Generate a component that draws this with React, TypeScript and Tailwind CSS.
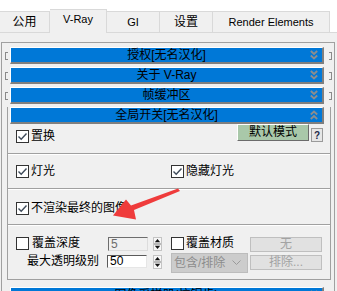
import React from "react";

const Check = ({ checked }: { checked?: boolean }) => (
  <span className="flex h-[13px] w-[13px] shrink-0 items-center justify-center border border-[#333] bg-white">
    {checked && (
      <svg width="11" height="11" viewBox="0 0 11 11">
        <polyline points="1.5,5.5 4.2,8.2 9.5,2.5" fill="none" stroke="#3f4b5a" strokeWidth="1.4" />
      </svg>
    )}
  </span>
);

const Chevrons = ({ up }: { up?: boolean }) => (
  <svg width="8" height="10" viewBox="0 0 8 10" className="shrink-0">
    {up ? (
      <>
        <polyline points="0.8,4.5 4,1.5 7.2,4.5" fill="none" stroke="#8d8d8d" strokeWidth="1.8" />
        <polyline points="0.8,9 4,6 7.2,9" fill="none" stroke="#8d8d8d" strokeWidth="1.8" />
      </>
    ) : (
      <>
        <polyline points="0.8,1 4,4 7.2,1" fill="none" stroke="#8d8d8d" strokeWidth="1.8" />
        <polyline points="0.8,5.5 4,8.5 7.2,5.5" fill="none" stroke="#8d8d8d" strokeWidth="1.8" />
      </>
    )}
  </svg>
);

const Bar = ({ title, up }: { title: string; up?: boolean }) => (
  <div className="flex h-[17px] w-[314px] items-center border-t border-l border-r-2 border-b-2 border-t-white border-l-white border-r-[#7f7f7f] border-b-[#7f7f7f] bg-[#0078d7]">
    <span className="w-[12px] shrink-0" />
    <span className="flex-1 text-center text-[12px] leading-[14px] text-black">{title}</span>
    <span className="mr-[4px] flex">
      <Chevrons up={up} />
    </span>
  </div>
);

const Rollout = ({ title }: { title: string }) => (
  <div className="mb-[3px] flex items-center">
    <span className="ml-[3px] h-[8px] w-[3px] border-y border-l border-[#8a8a8a]" />
    <span className="ml-[2px] flex">
      <Bar title={title} />
    </span>
    <span className="ml-[5px] h-[8px] w-[3px] border-y border-r border-[#8a8a8a]" />
  </div>
);

const Spinner = () => (
  <svg width="9" height="14" viewBox="0 0 9 14" className="shrink-0">
    <rect x="0.5" y="0.5" width="8" height="13" fill="#f7f7f7" stroke="#c4c4c4" />
    <line x1="1" y1="7" x2="8" y2="7" stroke="#7a7a7a" />
    <polygon points="4.5,2 7.2,5.2 1.8,5.2" fill="#111" />
    <polygon points="1.8,8.8 7.2,8.8 4.5,12" fill="#111" />
  </svg>
);

const Separator = () => <div className="h-[2px] border-t border-b border-t-[#a0a0a0] border-b-white" />;

const tabs = [
  { label: "公用", w: "w-[50px]" },
  { label: "V-Ray", w: "w-[57px]", active: true },
  { label: "GI", w: "w-[53px]" },
  { label: "设置", w: "w-[53px]" },
  { label: "Render Elements", w: "w-[117px]" },
];

export default function App() {
  return (
    <div className="relative h-[291px] w-[337px] overflow-hidden bg-white font-['Liberation_Sans','Noto_Sans_CJK_SC',sans-serif] text-[12px] leading-[13px] text-black">
      {/* tab strip */}
      <div className="flex h-[33px] items-end border-b border-[#d9d9d9]">
        {tabs.map((t) =>
          t.active ? (
            <div
              key={t.label}
              className={`${t.w} relative z-10 -mb-px flex h-[24px] items-center justify-center border-t border-r border-[#d9d9d9] bg-[#f0f0f0] pb-[4px] text-[11px]`}
            >
              {t.label}
            </div>
          ) : (
            <div
              key={t.label}
              className={`${t.w} flex h-[21px] items-center justify-center border-t border-r border-[#d9d9d9] bg-[#f0f0f0] text-[11px]`}
            >
              <span className={t.label.length <= 2 && /[^\x00-\x7f]/.test(t.label) ? "text-[12px]" : ""}>{t.label}</span>
            </div>
          )
        )}
      </div>

      {/* panel */}
      <div className="h-[258px] bg-[#f0f0f0] pt-[9px]">
        <div className="ml-[1px] h-[260px] w-[334px] border-t border-x border-[#a0a0a0] pt-[4px]">
          <Rollout title="授权[无名汉化]" />
          <Rollout title="关于 V-Ray" />
          <Rollout title="帧缓冲区" />

          {/* expanded rollout */}
          <div className="ml-[5px] w-[324px] border-x border-b border-[#a0a0a0]">
            <div className="ml-[2px] flex">
              <Bar title="全局开关[无名汉化]" up />
            </div>

            <div className="flex h-[29px] items-start pl-[8px]">
              <label className="mt-[6px] flex items-center gap-[2px]">
                <Check checked />
                <span>置换</span>
              </label>
              <button className="ml-auto h-[17px] w-[72px] border border-t-white border-l-white border-r-[#6b6b6b] border-b-[#6b6b6b] bg-[#a9c8a9] text-[12px] leading-[13px]">
                默认模式
              </button>
              <span className="mt-[4px] mr-[7px] ml-[2px] flex h-[14px] w-[12px] items-center justify-center border border-[#9a9a9a] bg-[#e6e6e6] text-[10px] font-bold text-[#1d2a4a]">
                ?
              </span>
            </div>
            <Separator />

            <div className="flex h-[33px] items-start pt-[10px] pl-[8px]">
              <label className="flex w-[155px] items-center gap-[2px]">
                <Check checked />
                <span>灯光</span>
              </label>
              <label className="flex items-center gap-[2px]">
                <Check checked />
                <span>隐藏灯光</span>
              </label>
            </div>
            <Separator />

            <div className="flex h-[34px] items-start pt-[12px] pl-[8px]">
              <label className="flex items-center gap-[2px]">
                <Check checked />
                <span>不渲染最终的图像</span>
              </label>
            </div>
            <Separator />

            <div className="h-[53px] pt-[11px] pl-[8px]">
              <div className="flex h-[15px] items-start">
                <div className="flex w-[155px] items-start">
                  <label className="flex w-[92px] items-center gap-[3px]">
                    <Check />
                    <span>覆盖深度</span>
                  </label>
                  <div className="h-[14px] w-[40px] border border-t-[#6d6d6d] border-l-[#6d6d6d] border-r-[#dcdcdc] border-b-[#dcdcdc] bg-[#f0f0f0] pl-[2px] text-[12px] leading-[12px] text-[#6d6d6d]">
                    5
                  </div>
                  <span className="ml-[5px] flex">
                    <Spinner />
                  </span>
                </div>
                <label className="flex w-[79px] items-center gap-[2px]">
                  <Check />
                  <span>覆盖材质</span>
                </label>
                <div className="flex h-[15px] w-[72px] items-center justify-center border border-[#bfbfbf] bg-[#e1e1e1] text-[#a3a3a3]">
                  无
                </div>
              </div>

              <div className="mt-[1px] flex h-[20px] items-start">
                <div className="flex w-[155px] items-start pt-[2px]">
                  <span className="ml-[11px] w-[80px]">最大透明级别</span>
                  <div className="h-[13px] w-[40px] border border-t-[#5a5a5a] border-l-[#5a5a5a] border-r-[#e6e6e6] border-b-[#e6e6e6] bg-white pl-[2px] text-[12px] leading-[11px]">
                    50
                  </div>
                  <span className="ml-[6px] flex">
                    <Spinner />
                  </span>
                </div>
                <div className="flex h-[20px] w-[77px] items-center border border-[#bcbcbc] bg-[#cccccc] pl-[2px] text-[#8c8c8c]">
                  <span className="flex-1">包含/排除</span>
                  <svg width="9" height="6" viewBox="0 0 9 6" className="mr-[6px]">
                    <polyline points="0.5,0.5 4.5,4.5 8.5,0.5" fill="none" stroke="#9a9a9a" strokeWidth="1" />
                  </svg>
                </div>
                <div className="mt-[2px] ml-[2px] flex h-[15px] w-[72px] items-center justify-center border border-[#bfbfbf] bg-[#e1e1e1] text-[#a3a3a3]">
                  排除...
                </div>
              </div>
            </div>
          </div>

          <div className="mt-[7px]">
            <Rollout title="图像采样器(抗锯齿)" />
          </div>
        </div>
      </div>

      {/* red annotation arrow */}
      <svg className="pointer-events-none absolute top-0 left-0" width="337" height="291" viewBox="0 0 337 291">
        <polygon
          points="178,188.5 180,191 134,210 136,219.5 113,215.5 126,199.5 131,205.5"
          fill="#ef3b3b"
        />
      </svg>
    </div>
  );
}
